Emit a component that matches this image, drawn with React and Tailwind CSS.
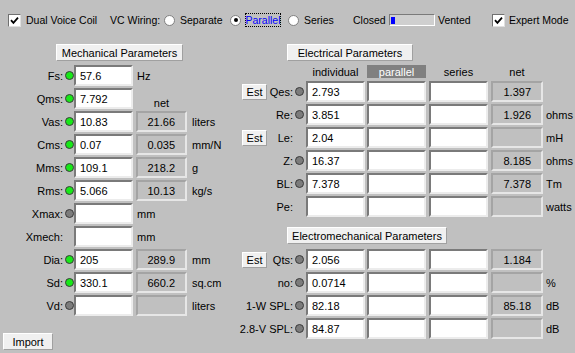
import React from "react";

const mechRows = [
  { label: "Fs:", led: "on", value: "57.6", unit: "Hz" },
  { label: "Qms:", led: "on", value: "7.792", netHead: true },
  { label: "Vas:", led: "on", value: "10.83", net: "21.66", unit: "liters" },
  { label: "Cms:", led: "on", value: "0.07", net: "0.035", unit: "mm/N" },
  { label: "Mms:", led: "on", value: "109.1", net: "218.2", unit: "g" },
  { label: "Rms:", led: "on", value: "5.066", net: "10.13", unit: "kg/s" },
  { label: "Xmax:", led: "off", value: "", unit: "mm" },
  { label: "Xmech:", value: "", unit: "mm" },
  { label: "Dia:", led: "on", value: "205", net: "289.9", unit: "mm" },
  { label: "Sd:", led: "on", value: "330.1", net: "660.2", unit: "sq.cm" },
  { label: "Vd:", led: "off", value: "", net: "", unit: "liters" },
];

const elecRows = [
  { label: "Qes:", est: true, led: "off", value: "2.793", net: "1.397", unit: "" },
  { label: "Re:", led: "off", value: "3.851", net: "1.926", unit: "ohms" },
  { label: "Le:", est: true, value: "2.04", net: "", unit: "mH" },
  { label: "Z:", led: "off", value: "16.37", net: "8.185", unit: "ohms" },
  { label: "BL:", led: "off", value: "7.378", net: "7.378", unit: "Tm" },
  { label: "Pe:", value: "", net: "", unit: "watts" },
];

const emRows = [
  { label: "Qts:", est: true, led: "off", value: "2.056", net: "1.184", unit: "" },
  { label: "no:", led: "off", value: "0.0714", net: "", unit: "%" },
  { label: "1-W SPL:", led: "off", value: "82.18", net: "85.18", unit: "dB" },
  { label: "2.8-V SPL:", led: "off", value: "84.87", net: "", unit: "dB" },
];

const Led = ({ state }) => {
  if (!state) return null;
  return (
    <span
      className={
        state === "on"
          ? "block w-[9px] h-[9px] rounded-full border border-[#3a3a3a] bg-[#18e818]"
          : "block w-[9px] h-[9px] rounded-full border border-[#3a3a3a] bg-[#7c7c7c]"
      }
    />
  );
};

const Field = ({ value, w = "w-[59px]" }) => (
  <div
    className={`${w} h-[21px] bg-white border-2 border-t-[#7a7a7a] border-l-[#7a7a7a] border-r-[#ececec] border-b-[#ececec] pl-[4px] flex items-center`}
  >
    {value}
  </div>
);

const NetBox = ({ value, w = "w-[51px]" }) => (
  <div
    className={`${w} h-[21px] border-2 border-t-[#a4a4a4] border-l-[#a4a4a4] border-r-[#e6e6e6] border-b-[#e6e6e6] pr-[10px] flex items-center justify-end`}
  >
    {value}
  </div>
);

const FlatButton = ({ children, className }) => (
  <div
    className={`h-[17px] bg-[#f0f0f0] border border-t-white border-l-white border-r-[#a0a0a0] border-b-[#a0a0a0] flex items-center justify-center ${className}`}
  >
    {children}
  </div>
);

const Radio = ({ checked }) => (
  <span className="w-[11px] h-[11px] rounded-full bg-white border border-[#808080] flex items-center justify-center shrink-0">
    {checked && <span className="w-[4px] h-[4px] rounded-full bg-black" />}
  </span>
);

const Check = () => (
  <span className="w-[13px] h-[13px] bg-white border border-t-[#707070] border-l-[#707070] border-r-[#e0e0e0] border-b-[#e0e0e0] flex items-center justify-center shrink-0">
    <svg width="9" height="9" viewBox="0 0 9 9">
      <path d="M1 4.2 L3.4 6.8 L8 1.6" fill="none" stroke="black" strokeWidth="1.8" />
    </svg>
  </span>
);

const ElecRow = ({ row }) => (
  <div className="flex items-center h-[21px]">
    <div className="w-[63px] flex items-center">
      {row.est && (
        <FlatButton className="w-[25px] !h-[16px] ml-[12px]">Est</FlatButton>
      )}
      <span className="ml-auto whitespace-nowrap">{row.label}</span>
    </div>
    <div className="w-[13px] flex items-center pl-[2px]">
      <Led state={row.led} />
    </div>
    <Field value={row.value} />
    <div className="ml-[2px]">
      <Field value="" />
    </div>
    <div className="ml-[3px]">
      <Field value="" />
    </div>
    <div className="ml-[3px]">
      <NetBox value={row.net} w="w-[52px]" />
    </div>
    <span className="ml-[3px]">{row.unit}</span>
  </div>
);

export default function App() {
  return (
    <div className="w-[575px] h-[353px] bg-[#c0c0c0] overflow-hidden text-[11px] text-black font-['Liberation_Sans',Arial,sans-serif] leading-[12px]">
      {/* top bar */}
      <div className="h-[40px] flex items-center whitespace-nowrap text-[10.5px]">
        <div className="ml-[8px]">
          <Check />
        </div>
        <span className="ml-[5px] w-[84px]">Dual Voice Coil</span>
        <span className="w-[54px]">VC Wiring:</span>
        <Radio />
        <span className="ml-[5px] w-[50px]">Separate</span>
        <Radio checked />
        <span className="ml-[4px] w-[36px] h-[14px] border border-dotted border-black text-[#0000ff] flex items-center justify-center">
          Parallel
        </span>
        <span className="ml-[7px]">
          <Radio />
        </span>
        <span className="ml-[5px] w-[49px]">Series</span>
        <span className="w-[36px]">Closed</span>
        <div className="w-[46px] h-[12px] bg-[#cfcfcf] border border-t-[#7a7a7a] border-l-[#7a7a7a] border-r-white border-b-white flex items-center">
          <span className="ml-[1px] w-[4px] h-[7px] bg-[#0000ff]" />
        </div>
        <span className="ml-[3px] w-[54px]">Vented</span>
        <Check />
        <span className="ml-[4px]">Expert Mode</span>
      </div>

      <div className="flex">
        {/* mechanical */}
        <div className="w-[230px] shrink-0">
          <FlatButton className="ml-[56px] mt-[4px] w-[127px]">Mechanical Parameters</FlatButton>
          <div className="mt-[4px] flex flex-col gap-[2px]">
            {mechRows.map((row) => (
              <div key={row.label} className="flex items-center h-[21px]">
                <span className="w-[63px] text-right">{row.label}</span>
                <div className="w-[11px] flex items-center pl-[2px]">
                  <Led state={row.led} />
                </div>
                <Field value={row.value} />
                {row.netHead ? (
                  <div className="ml-[3px] w-[51px] h-full flex items-end justify-center">net</div>
                ) : row.net !== undefined ? (
                  <>
                    <div className="ml-[3px]">
                      <NetBox value={row.net} />
                    </div>
                    <span className="ml-[5px]">{row.unit}</span>
                  </>
                ) : (
                  <span className="ml-[4px]">{row.unit}</span>
                )}
              </div>
            ))}
          </div>
          <FlatButton className="ml-[3px] mt-[17px] w-[50px]">Import</FlatButton>
        </div>

        {/* electrical */}
        <div className="flex-1">
          <FlatButton className="ml-[57px] mt-[4px] w-[126px]">Electrical Parameters</FlatButton>
          <div className="mt-[4px] h-[13px] flex items-center">
            <span className="ml-[76px] w-[59px] text-center">individual</span>
            <span className="ml-[2px] w-[59px] h-[13px] bg-[#808080] text-white text-center flex items-center justify-center">
              parallel
            </span>
            <span className="ml-[3px] w-[59px] text-center">series</span>
            <span className="ml-[3px] w-[52px] text-center">net</span>
          </div>
          <div className="mt-[3px] flex flex-col gap-[2px]">
            {elecRows.map((row) => (
              <ElecRow key={row.label} row={row} />
            ))}
          </div>
          <FlatButton className="ml-[57px] mt-[10px] w-[160px]">Electromechanical Parameters</FlatButton>
          <div className="mt-[5px] flex flex-col gap-[2px]">
            {emRows.map((row) => (
              <ElecRow key={row.label} row={row} />
            ))}
          </div>
        </div>
      </div>
    </div>
  );
}
